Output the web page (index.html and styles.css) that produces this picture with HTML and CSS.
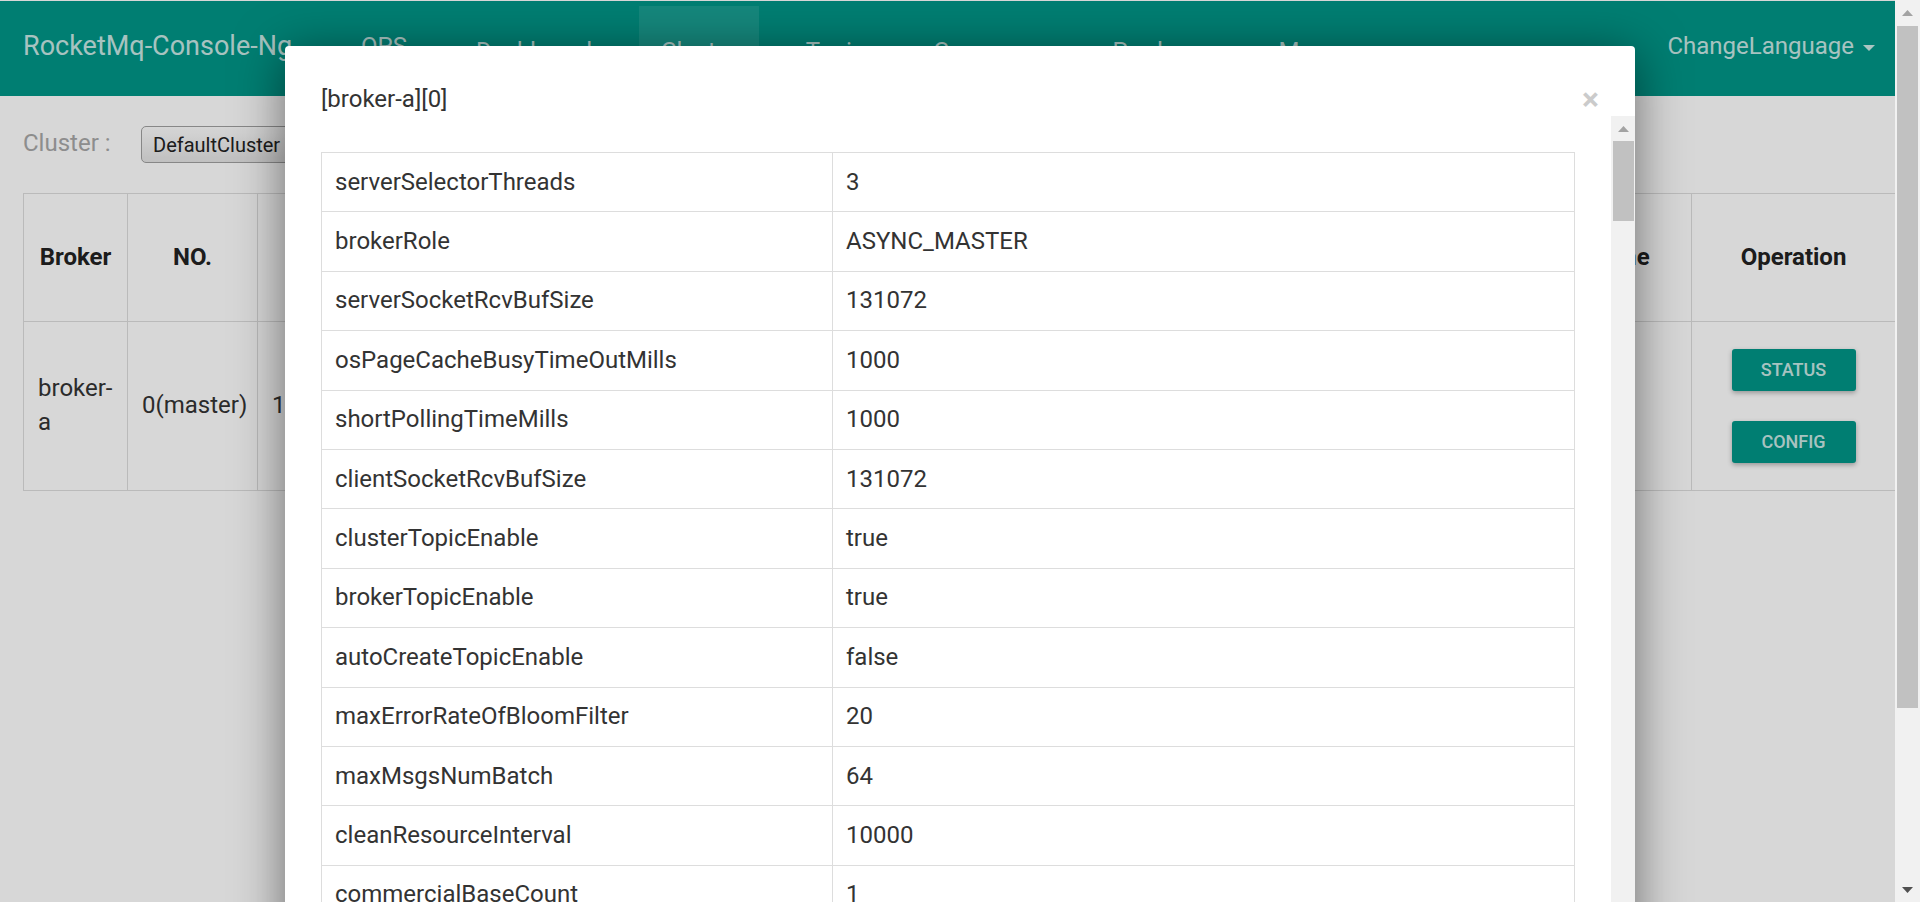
FILE: index.html
```html
<!DOCTYPE html>
<html lang="en">
<head>
<meta charset="utf-8">
<title>RocketMq-Console-Ng</title>
<link rel="stylesheet" href="styles.css">
</head>
<body>
<div class="page">
  <nav class="navbar">
    <div class="brand">RocketMq-Console-Ng</div>
    <ul class="nav">
      <li class="nav-item ops">OPS</li>
      <li class="nav-item">Dashboard</li>
      <li class="nav-item active">Cluster</li>
      <li class="nav-item">Topic</li>
      <li class="nav-item">Consumer</li>
      <li class="nav-item">Producer</li>
      <li class="nav-item">Message</li>
    </ul>
    <div class="lang">ChangeLanguage<svg class="caret" width="12" height="6" viewBox="0 0 12 6"><polygon points="0,0 12,0 6,6" fill="currentColor"/></svg></div>
  </nav>

  <main class="content">
    <div class="filter">
      <span class="filter-label">Cluster :</span>
      <div class="select">DefaultCluster</div>
    </div>

    <table class="cluster-table">
      <colgroup>
        <col style="width:104px"><col style="width:130px"><col style="width:210px"><col style="width:150px">
        <col style="width:170px"><col style="width:170px"><col style="width:186px"><col style="width:186px">
        <col style="width:176px"><col style="width:186px"><col style="width:204px">
      </colgroup>
      <thead>
        <tr>
          <th>Broker</th><th>NO.</th><th>Address</th><th>Version</th>
          <th>Produce Massage TPS</th><th>Consumer Massage TPS</th>
          <th>Yesterday Produce Count</th><th>Yesterday Consume Count</th>
          <th>Today Produce Count</th><th>Today Consume Count</th><th>Operation</th>
        </tr>
      </thead>
      <tbody>
        <tr>
          <td>broker-a</td><td>0(master)</td><td>172.17.0.3</td><td>V4_3_0</td>
          <td>0.00</td><td>0.00</td><td>0</td><td>0</td><td>0</td><td>0</td>
          <td class="ops-cell">
            <button class="btn">Status</button>
            <button class="btn">Config</button>
          </td>
        </tr>
      </tbody>
    </table>
  </main>

  <div class="backdrop"></div>

  <div class="modal">
    <div class="modal-header">
      <h4 class="modal-title">[broker-a][0]</h4>
      <span class="close">&times;</span>
    </div>
    <div class="modal-body">
      <div class="modal-scroll">
        <table class="cfg">
          <colgroup><col class="k"><col></colgroup>
          <tbody>
            <tr><td>serverSelectorThreads</td><td>3</td></tr>
            <tr><td>brokerRole</td><td>ASYNC_MASTER</td></tr>
            <tr><td>serverSocketRcvBufSize</td><td>131072</td></tr>
            <tr><td>osPageCacheBusyTimeOutMills</td><td>1000</td></tr>
            <tr><td>shortPollingTimeMills</td><td>1000</td></tr>
            <tr><td>clientSocketRcvBufSize</td><td>131072</td></tr>
            <tr><td>clusterTopicEnable</td><td>true</td></tr>
            <tr><td>brokerTopicEnable</td><td>true</td></tr>
            <tr><td>autoCreateTopicEnable</td><td>false</td></tr>
            <tr><td>maxErrorRateOfBloomFilter</td><td>20</td></tr>
            <tr><td>maxMsgsNumBatch</td><td>64</td></tr>
            <tr><td>cleanResourceInterval</td><td>10000</td></tr>
            <tr><td>commercialBaseCount</td><td>1</td></tr>
            <tr><td>maxTransferCountOnMessageInMemory</td><td>32</td></tr>
            <tr><td>brokerFastFailureEnable</td><td>true</td></tr>
          </tbody>
        </table>
      </div>
      <div class="scrollbar modal-sb">
        <div class="sb-btn"><svg width="11" height="6" viewBox="0 0 11 6"><polygon points="0,6 11,6 5.5,0" fill="#a3a3a3"/></svg></div>
        <div class="sb-thumb modal-thumb"></div>
      </div>
    </div>
  </div>
</div>

<div class="scrollbar page-sb">
  <div class="sb-btn"><svg width="11" height="6" viewBox="0 0 11 6"><polygon points="0,6 11,6 5.5,0" fill="#a3a3a3"/></svg></div>
  <div class="sb-thumb page-thumb"></div>
  <div class="sb-fill"></div>
  <div class="sb-btn"><svg width="11" height="6" viewBox="0 0 11 6"><polygon points="0,0 11,0 5.5,6" fill="#505050"/></svg></div>
</div>
</body>
</html>
```

FILE: styles.css
```css
* { box-sizing: border-box; }
html, body { margin: 0; padding: 0; }
body {
  display: flex;
  width: 1920px;
  height: 902px;
  overflow: hidden;
  background: #fff;
  font-family: Roboto, "Liberation Sans", Arial, sans-serif;
  color: #333;
}

.page {
  flex: 1;
  min-width: 0;
  position: relative;
  overflow: hidden;
  padding-top: 1px;
  background: #fff;
}

/* navbar */
.navbar {
  height: 95px;
  background: #009688;
  display: flex;
  align-items: flex-start;
  padding: 0 20px 0 23px;
  color: rgba(255, 255, 255, 0.8);
}
.brand {
  width: 316px;
  flex: none;
  font-size: 27px;
  line-height: 32px;
  padding-top: 28.8px;
  white-space: nowrap;
}
.nav {
  display: flex;
  gap: 25px;
  list-style: none;
  margin: 0;
  padding: 0;
}
.nav-item {
  margin-top: 5px;
  height: 90px;
  padding: 28.8px 22px 0;
  font-size: 24px;
  line-height: 32px;
  white-space: nowrap;
}
.nav-item.ops { padding-top: 23.8px; }
.nav-item.active { background: rgba(255, 255, 255, 0.1); }
.lang {
  margin-left: auto;
  font-size: 24px;
  line-height: 32px;
  padding-top: 28.8px;
  display: flex;
  align-items: center;
  white-space: nowrap;
}
.caret { margin-left: 9px; margin-top: 4px; }

/* content */
.content { padding: 30px 0 0 23px; }
.filter {
  display: flex;
  align-items: center;
  height: 37px;
}
.filter-label {
  width: 118px;
  font-size: 24px;
  color: #a8a8a8;
  margin-bottom: 4px;
}
.select {
  width: 230px;
  height: 37px;
  border: 1px solid #a0a0a0;
  border-radius: 5px;
  background: linear-gradient(#fdfdfd, #e4e4e4);
  font-size: 20px;
  padding: 0 11px;
  display: flex;
  align-items: center;
  color: #222;
}

.cluster-table {
  margin-top: 30px;
  border-collapse: collapse;
  table-layout: fixed;
  width: 1872px;
  font-size: 24px;
  line-height: 33.6px;
  color: #333;
}
.cluster-table th,
.cluster-table td {
  border: 1px solid #ddd;
  padding: 0 14px;
  vertical-align: middle;
}
.cluster-table th {
  height: 128px;
  text-align: center;
  font-weight: 700;
  color: #222;
}
.cluster-table td {
  height: 169px;
  text-align: left;
}
.cluster-table td.ops-cell { text-align: center; }

.btn {
  display: block;
  margin: 0 auto;
  width: 124px;
  height: 42px;
  border: 0;
  border-radius: 3px;
  background: #009688;
  color: rgba(255, 255, 255, 0.8);
  font-family: Roboto, "Liberation Sans", Arial, sans-serif;
  font-size: 18px;
  font-weight: 500;
  line-height: 42px;
  text-transform: uppercase;
  box-shadow: 0 2px 5px rgba(0, 0, 0, 0.3);
  padding: 0;
}
.btn + .btn { margin-top: 30px; }

/* modal */
.backdrop {
  position: absolute;
  inset: 0;
  background: rgba(0, 0, 0, 0.157);
}
.modal {
  position: absolute;
  left: 285px;
  top: 46px;
  width: 1350px;
  height: 1100px;
  background: #fff;
  border-radius: 4px;
  box-shadow: 0 8px 50px rgba(0, 0, 0, 0.5);
  display: flex;
  flex-direction: column;
}
.modal-header {
  height: 70px;
  flex: none;
  padding: 39px 36px 0;
  display: flex;
  justify-content: space-between;
  align-items: flex-start;
}
.modal-title {
  margin: 0;
  font-size: 24px;
  font-weight: 400;
  line-height: 28px;
  color: #333;
}
.close {
  font-size: 32px;
  font-weight: 700;
  line-height: 28px;
  color: #000;
  opacity: 0.2;
}
.modal-body {
  flex: 1;
  min-height: 0;
  display: flex;
}
.modal-scroll {
  flex: 1;
  padding: 36px;
  overflow: hidden;
}
.cfg {
  width: 100%;
  border-collapse: collapse;
  table-layout: fixed;
  font-size: 24px;
  line-height: 33.4px;
  color: #333;
}
.cfg col.k { width: 511px; }
.cfg td {
  border: 1px solid #ddd;
  padding: 12.5px 13px;
  white-space: nowrap;
}

/* scrollbars */
.scrollbar {
  background: #f1f1f1;
  display: flex;
  flex-direction: column;
  flex: none;
}
.modal-sb { width: 24px; }
.page-sb { width: 25px; height: 902px; }
.sb-btn {
  height: 25px;
  flex: none;
  display: flex;
  align-items: center;
  justify-content: center;
}
.sb-thumb { background: #c1c1c1; flex: none; }
.modal-thumb { height: 80px; margin: 0 1px 0 2px; }
.page-thumb { height: 682px; margin: 1px 2px 0; }
.sb-fill { flex: 1; }
```
